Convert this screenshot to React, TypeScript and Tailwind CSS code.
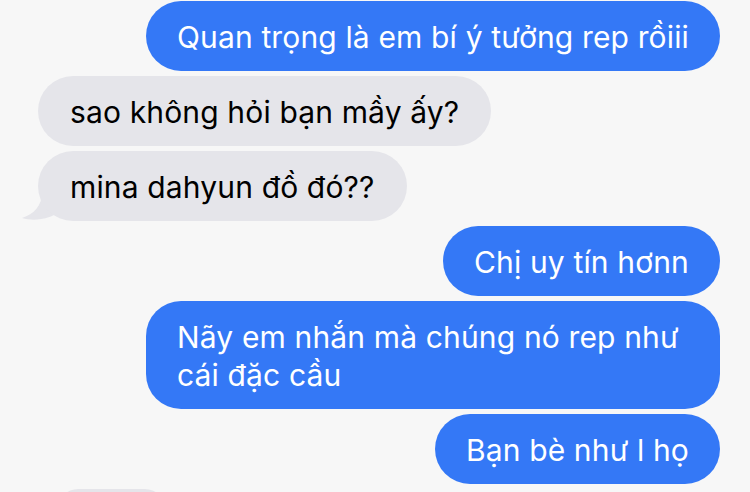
import React from "react";

const Blue = ({ children, className = "" }: { children: React.ReactNode; className?: string }) => (
  <div className={"self-end bg-[#3478f6] text-white rounded-[35px] px-[31px] pt-[17px] pb-[15px] whitespace-nowrap " + className}>{children}</div>
);

const Gray = ({ children, className = "" }: { children: React.ReactNode; className?: string }) => (
  <div className={"self-start bg-[#e5e5ea] text-black rounded-[35px] px-[32px] pt-[17px] pb-[15px] whitespace-nowrap " + className}>{children}</div>
);

export default function App() {
  return (
    <div
      className="w-[750px] h-[492px] overflow-hidden bg-[#f7f7f7] flex flex-col gap-[5px] pt-[1px] pl-[38px] pr-[30px] text-[30px] leading-[38px] tracking-[0.15px]"
      style={{ fontFamily: "Inter, 'Noto Sans', sans-serif" }}
    >
      <Blue>Quan trọng là em bí ý tưởng rep rồiii</Blue>
      <Gray>sao không hỏi bạn mầy ấy?</Gray>
      <div className="relative self-start">
        <svg className="absolute left-[-18px] bottom-[-1px]" width="40" height="30" viewBox="0 0 40 30">
          <path d="M22 0 C22 14 14 22 2 26 C12 29 26 28 36 22 L30 0 Z" fill="#e5e5ea" />
        </svg>
        <Gray className="relative">mina dahyun đồ đó??</Gray>
      </div>
      <Blue>Chị uy tín hơnn</Blue>
      <Blue className="w-[574px]">
        Nãy em nhắn mà chúng nó rep như
        <br />
        cái đặc cầu
      </Blue>
      <Blue>Bạn bè như l họ</Blue>
      <div className="ml-[20px] w-[107px] h-[40px] rounded-[20px] bg-[#e5e5ea] shrink-0" />
    </div>
  );
}
